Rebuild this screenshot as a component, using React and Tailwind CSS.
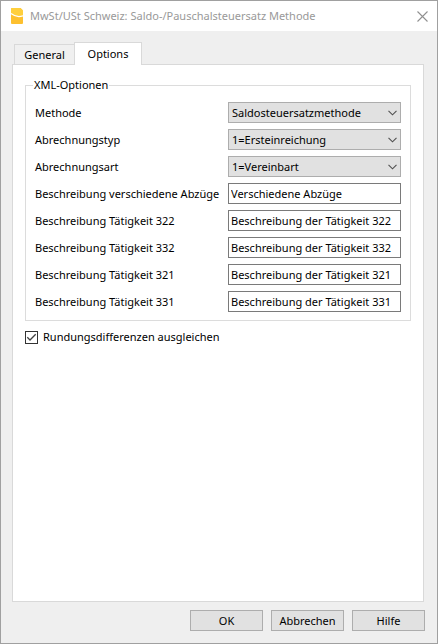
import { useState } from "react";

const selects = [
  { id: "methode", label: "Methode", value: "Saldosteuersatzmethode" },
  { id: "typ", label: "Abrechnungstyp", value: "1=Ersteinreichung" },
  { id: "art", label: "Abrechnungsart", value: "1=Vereinbart" },
];

const fields = [
  { id: "abzuege", label: "Beschreibung verschiedene Abzüge", value: "Verschiedene Abzüge" },
  { id: "t322", label: "Beschreibung Tätigkeit 322", value: "Beschreibung der Tätigkeit 322" },
  { id: "t332", label: "Beschreibung Tätigkeit 332", value: "Beschreibung der Tätigkeit 332" },
  { id: "t321", label: "Beschreibung Tätigkeit 321", value: "Beschreibung der Tätigkeit 321" },
  { id: "t331", label: "Beschreibung Tätigkeit 331", value: "Beschreibung der Tätigkeit 331" },
];

function Row({ id, label, children }) {
  return (
    <div className="flex h-[21px] items-center">
      <label htmlFor={id} className="w-[193px] shrink-0 whitespace-nowrap">
        {label}
      </label>
      {children}
    </div>
  );
}

function SelectField({ id, value }) {
  return (
    <div className="grid h-full min-w-0 flex-1 items-center">
      <select
        id={id}
        className="col-start-1 row-start-1 h-[21px] w-full appearance-none rounded-none border border-[#adadad] bg-[#e1e1e1] pl-[3px] pr-5"
      >
        <option>{value}</option>
      </select>
      <svg
        viewBox="0 0 9 6"
        className="pointer-events-none col-start-1 row-start-1 mr-1 h-[6px] w-[9px] justify-self-end"
        fill="none"
        stroke="#505050"
        strokeWidth="1.1"
      >
        <path d="M0.5 0.8 4.5 4.8 8.5 0.8" />
      </svg>
    </div>
  );
}

function DialogButton({ children }) {
  return (
    <button type="button" className="h-[21px] w-[73px] border border-[#adadad] bg-[#e1e1e1] text-center leading-none">
      {children}
    </button>
  );
}

export default function App() {
  const [balance, setBalance] = useState(true);
  return (
    <div className="flex min-h-screen flex-col border border-[#a0a0a0] bg-[#efefef] font-['Noto_Sans','Open_Sans',sans-serif] text-[11px] leading-4 text-black">
      <header className="flex h-[30px] items-center bg-white pl-[10px] pr-[9px] text-[#999999]">
        <svg viewBox="0 0 12 16" className="h-4 w-3 shrink-0">
          <path d="M1 0H9.5L12 2.5V15Q12 16 11 16H1Q0 16 0 15V1Q0 0 1 0Z" fill="#fdc02f" />
          <path d="M1 0H9.5L12 2.5V8Q6 10 0 5.5V1Q0 0 1 0Z" fill="#ffcf3c" />
          <path d="M0 5.5Q5.5 10 12 7.8" fill="none" stroke="#fff" strokeWidth="1.2" />
        </svg>
        <h1 className="ml-[7px] flex-1 whitespace-nowrap">MwSt/USt Schweiz: Saldo-/Pauschalsteuersatz Methode</h1>
        <button type="button" aria-label="Schließen">
          <svg viewBox="0 0 11 11" className="h-[11px] w-[11px]" fill="none" stroke="#909090" strokeWidth="1.1">
            <path d="M0.5 0.5 10.5 10.5M10.5 0.5 0.5 10.5" />
          </svg>
        </button>
      </header>

      <main className="flex flex-1 flex-col pl-[11px] pr-[13px] pt-[11px]">
        <div role="tablist" className="flex items-end pl-[2px]">
          <button
            type="button"
            role="tab"
            aria-selected="false"
            className="h-5 w-[60px] border border-r-0 border-b-0 border-[#d9d9d9] bg-[#f0f0f0] text-center"
          >
            General
          </button>
          <button
            type="button"
            role="tab"
            aria-selected="true"
            className="z-10 -mb-px h-[23px] w-[68px] border border-b-0 border-[#d9d9d9] bg-white text-center"
          >
            Options
          </button>
        </div>

        <section role="tabpanel" className="flex-1 border border-[#d9d9d9] bg-white px-3 pt-3">
          <fieldset className="min-w-0 border border-[#dcdcdc] px-[9px] pt-[9px] pb-2">
            <legend className="-ml-[2px] px-px">XML-Optionen</legend>
            <div className="flex flex-col gap-[6px]">
              {selects.map((s) => (
                <Row key={s.id} id={s.id} label={s.label}>
                  <SelectField id={s.id} value={s.value} />
                </Row>
              ))}
              {fields.map((f) => (
                <Row key={f.id} id={f.id} label={f.label}>
                  <input
                    id={f.id}
                    type="text"
                    defaultValue={f.value}
                    className="h-[21px] min-w-0 flex-1 border border-[#7a7a7a] bg-white px-[2px]"
                  />
                </Row>
              ))}
            </div>
          </fieldset>

          <label className="mt-2 flex items-center gap-[5px]">
            <span className="grid">
              <input
                type="checkbox"
                checked={balance}
                onChange={(e) => setBalance(e.target.checked)}
                className="peer col-start-1 row-start-1 h-[13px] w-[13px] appearance-none border border-[#333333] bg-white"
              />
              <svg
                viewBox="0 0 13 13"
                className="pointer-events-none invisible col-start-1 row-start-1 h-[13px] w-[13px] peer-checked:visible"
                fill="none"
                stroke="#404040"
                strokeWidth="1.3"
              >
                <path d="M2.3 6.3 5 9 10.7 3.3" />
              </svg>
            </span>
            Rundungsdifferenzen ausgleichen
          </label>
        </section>
      </main>

      <footer className="flex justify-end gap-2 pt-2 pr-3 pb-3">
        <DialogButton>OK</DialogButton>
        <DialogButton>Abbrechen</DialogButton>
        <DialogButton>Hilfe</DialogButton>
      </footer>
    </div>
  );
}
